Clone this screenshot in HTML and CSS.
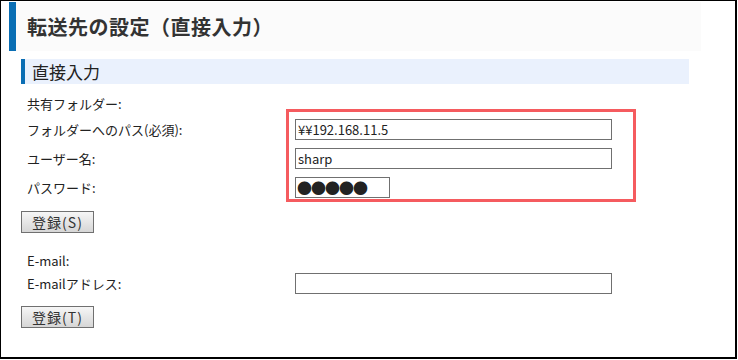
FILE: index.html
```html
<!DOCTYPE html>
<html>
<head>
    <meta charset="UTF-8">
    <title>転送先の設定（直接入力）</title>
    <link rel="stylesheet" href="styles.css">
</head>
<body>
    <div class="frame">
        <div class="page-title">転送先の設定（直接入力）</div>
        <div class="section-title">直接入力</div>

        <div class="form-block">
            <div class="highlight"></div>
            <div class="form-row plain">
                <span class="label">共有フォルダー:</span>
            </div>
            <div class="form-row">
                <span class="label">フォルダーへのパス(必須):</span>
                <input type="text" class="field" value="¥¥192.168.11.5">
            </div>
            <div class="form-row">
                <span class="label">ユーザー名:</span>
                <input type="text" class="field" value="sharp">
            </div>
            <div class="form-row">
                <span class="label">パスワード:</span>
                <input type="text" class="field password" value="●●●●●">
            </div>
            <button class="submit-btn">登録(S)</button>
        </div>

        <div class="form-block mail">
            <div class="form-row plain">
                <span class="label">E-mail:</span>
            </div>
            <div class="form-row">
                <span class="label">E-mailアドレス:</span>
                <input type="text" class="field" value="">
            </div>
            <button class="submit-btn">登録(T)</button>
        </div>
    </div>
</body>
</html>
```

FILE: styles.css
```css
body {
    margin: 0;
    font-family: "Noto Sans CJK JP", "DejaVu Sans", sans-serif;
    font-size: 13px;
    color: #222;
    background-color: #fff;
}

.frame {
    box-sizing: border-box;
    width: 737px;
    height: 359px;
    border: 1px solid #000;
    border-width: 1px 2px 2px 1px;
    padding-top: 1px;
}

.page-title {
    box-sizing: border-box;
    width: 692px;
    height: 49px;
    margin-left: 8px;
    padding-left: 11px;
    border-left: 7px solid #0a6eb4;
    background-color: #fbfbfb;
    display: flex;
    align-items: center;
    font-size: 20px;
    font-weight: bold;
    color: #333;
    letter-spacing: 0.5px;
}

.section-title {
    box-sizing: border-box;
    width: 668px;
    height: 25px;
    margin: 8px 0 0 20px;
    padding-left: 7px;
    border-left: 4px solid #0a6eb4;
    background-color: #eaf1fd;
    display: flex;
    align-items: center;
    font-size: 17px;
    color: #222;
}

.form-block {
    position: relative;
    margin-left: 20px;
    padding-top: 9px;
}

.form-block.mail {
    padding-top: 17px;
}

.form-row {
    display: flex;
    align-items: center;
    height: 21px;
    margin-bottom: 8px;
}

.form-row.plain {
    height: 20px;
    margin-bottom: 6px;
}

.form-block.mail .form-row.plain {
    margin-bottom: 3px;
}

.label {
    width: 268px;
    padding-left: 6px;
    flex-shrink: 0;
    white-space: nowrap;
}

.field {
    box-sizing: border-box;
    width: 317px;
    height: 21px;
    margin: 0;
    padding: 0 2px;
    border: 1px solid #707070;
    border-radius: 0;
    font-family: "Noto Sans CJK JP", "DejaVu Sans", sans-serif;
    font-size: 13px;
    color: #222;
    background-color: #fff;
}

.field.password {
    width: 95px;
    font-size: 15px;
    letter-spacing: -1px;
    padding-left: 1px;
}

.submit-btn {
    box-sizing: border-box;
    width: 73px;
    height: 22px;
    margin-top: 5px;
    padding: 0;
    border: 1px solid #707070;
    border-radius: 0;
    background: linear-gradient(#f6f6f6, #d6d6d6);
    font-family: "Noto Sans CJK JP", "DejaVu Sans", sans-serif;
    font-size: 14px;
    letter-spacing: 1px;
    color: #333;
    cursor: pointer;
}

.form-block.mail .submit-btn {
    margin-top: 4px;
}

/* red annotation frame around the entered values */
.highlight {
    position: absolute;
    left: 265px;
    top: 25px;
    width: 350px;
    height: 93px;
    box-sizing: border-box;
    border: 3px solid #f55b5f;
    pointer-events: none;
}
```
